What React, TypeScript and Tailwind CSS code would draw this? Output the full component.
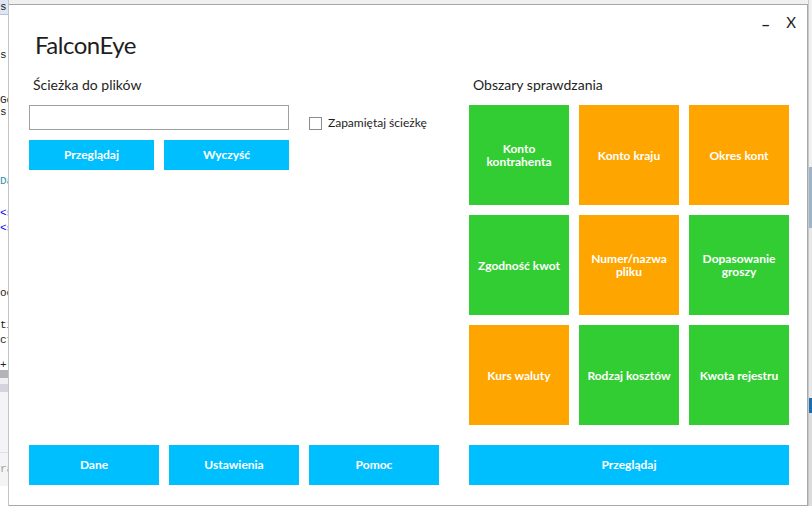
const tiles = [
  { label: "Konto kontrahenta", color: "bg-[#32cd32]" },
  { label: "Konto kraju", color: "bg-[#ffa500]" },
  { label: "Okres kont", color: "bg-[#ffa500]" },
  { label: "Zgodność kwot", color: "bg-[#32cd32]" },
  { label: "Numer/nazwa pliku", color: "bg-[#ffa500]" },
  { label: "Dopasowanie groszy", color: "bg-[#32cd32]" },
  { label: "Kurs waluty", color: "bg-[#ffa500]" },
  { label: "Rodzaj kosztów", color: "bg-[#32cd32]" },
  { label: "Kwota rejestru", color: "bg-[#32cd32]" },
];

// editor lines peeking out behind the window, left side
const bgLines: { h: string; text: string; cls: string }[] = [
  { h: "h-[15px]", text: "s", cls: "bg-[#dde6f2] text-[#1e1e1e] border-b border-[#b8c4d4]" },
  { h: "h-[33px]", text: "", cls: "" },
  { h: "h-[14px]", text: "s;", cls: "text-[#1e1e1e]" },
  { h: "h-[32px]", text: "", cls: "" },
  { h: "h-[12px]", text: "Ge", cls: "text-[#1e1e1e]" },
  { h: "h-[12px]", text: "s;", cls: "text-[#1e1e1e]" },
  { h: "h-[56px]", text: "", cls: "" },
  { h: "h-[14px]", text: "Da", cls: "text-[#2b91af]" },
  { h: "h-[18px]", text: "", cls: "" },
  { h: "h-[15px]", text: "<s", cls: "text-[#0000ff]" },
  { h: "h-[15px]", text: "<s", cls: "text-[#0000ff]" },
  { h: "h-[50px]", text: "", cls: "" },
  { h: "h-[15px]", text: "oc", cls: "text-[#1e1e1e]" },
  { h: "h-[17px]", text: "", cls: "" },
  { h: "h-[15px]", text: "ti", cls: "text-[#1e1e1e]" },
  { h: "h-[15px]", text: "ct", cls: "text-[#1e1e1e]" },
  { h: "h-[12px]", text: "", cls: "" },
  { h: "h-[10px]", text: "+", cls: "text-[#1e1e1e]" },
  { h: "h-[8px]", text: "", cls: "bg-[#b4b4b8]" },
  { h: "h-[6px]", text: "", cls: "bg-[#f0f0f4]" },
  { h: "h-[8px]", text: "", cls: "bg-[#d4d4dc]" },
  { h: "h-[60px]", text: "", cls: "bg-[#f4f4f6]" },
  { h: "h-[34px]", text: "ra", cls: "text-[#a0a0a0] bg-[#f4f4f6] border-t border-[#e0e0e0]" },
];

export default function App() {
  return (
    <div
      className="w-[812px] h-[506px] flex overflow-hidden bg-[#f0f0f0]"
      style={{ fontFamily: 'Lato, "Open Sans", sans-serif' }}
    >
      {/* background editor, left */}
      <div className="w-[9px] shrink-0 flex flex-col overflow-hidden bg-white border-r border-[#c4c4c4] font-['Liberation_Mono',monospace] text-[11px] leading-[11px]">
        {bgLines.map((l, i) => (
          <div key={i} className={`${l.h} ${l.cls} shrink-0 whitespace-nowrap overflow-hidden flex items-center`}>
            {l.text}
          </div>
        ))}
      </div>

      {/* window */}
      <div className="w-[799px] h-[502px] mt-[4px] shrink-0 bg-white border border-[#a8a8a8] border-l-0 flex flex-col">
        {/* header */}
        <div className="flex justify-between h-[70px]">
          <h1 className="ml-[26px] mt-[24px] text-[24px] leading-[32px] tracking-[-0.5px] text-[#1e1e1e]">FalconEye</h1>
          <div className="flex items-start gap-[16px] mr-[11px] mt-[7px] text-[#1e1e1e]">
            <span className="text-[16px] leading-[20px] font-bold mt-[2px]">–</span>
            <span className="text-[15px] leading-[20px]">X</span>
          </div>
        </div>

        <div className="flex pl-[20px] gap-[30px] flex-1 pb-[20px]">
          {/* left column */}
          <div className="w-[410px] flex flex-col">
            <p className="h-[20px] pl-[4px] text-[14px] leading-[20px] text-[#1e1e1e]">Ścieżka do plików</p>
            <div className="mt-[10px] flex items-start">
              <div className="w-[260px] flex flex-col gap-[10px]">
                <input className="h-[25px] w-[260px] border border-[#a0a0a0] outline-none px-1 text-[13px]" />
                <div className="flex gap-[10px]">
                  <button className="w-[125px] h-[30px] bg-[#00bfff] text-white text-[12px] font-bold">Przeglądaj</button>
                  <button className="w-[125px] h-[30px] bg-[#00bfff] text-white text-[12px] font-bold">Wyczyść</button>
                </div>
              </div>
              <label className="ml-[20px] mt-[11px] flex items-center gap-[6px] text-[12px] leading-[14px] whitespace-nowrap text-[#1e1e1e]">
                <span className="w-[13px] h-[13px] border border-[#8c8c8c] bg-white" />
                Zapamiętaj ścieżkę
              </label>
            </div>
            <div className="mt-auto flex gap-[10px]">
              {["Dane", "Ustawienia", "Pomoc"].map((b) => (
                <button key={b} className="w-[130px] h-[40px] bg-[#00bfff] text-white text-[12px] font-bold">
                  {b}
                </button>
              ))}
            </div>
          </div>

          {/* right column */}
          <div className="w-[320px] flex flex-col">
            <p className="h-[20px] pl-[4px] text-[14px] leading-[20px] text-[#1e1e1e]">Obszary sprawdzania</p>
            <div className="mt-[10px] grid grid-cols-3 gap-[10px]">
              {tiles.map((t) => (
                <div
                  key={t.label}
                  className={`${t.color} h-[100px] flex items-center justify-center text-center px-[6px] text-white text-[12px] leading-[13px] font-bold`}
                >
                  {t.label}
                </div>
              ))}
            </div>
            <button className="mt-auto h-[40px] w-[320px] bg-[#00bfff] text-white text-[12px] font-bold">Przeglądaj</button>
          </div>
        </div>
      </div>

      {/* background, right */}
      <div className="flex-1 flex flex-col bg-[#e4e4e4] border-l border-[#c8c8c8]">
        <div className="h-[167px] bg-[#f0f0f0]" />
        <div className="h-[61px] bg-[#9eb4c8]" />
        <div className="h-[170px] bg-[#e8e8e8]" />
        <div className="h-[15px] bg-[#1a6fb4]" />
        <div className="flex-1 bg-[#dcdcdc]" />
      </div>
    </div>
  );
}
